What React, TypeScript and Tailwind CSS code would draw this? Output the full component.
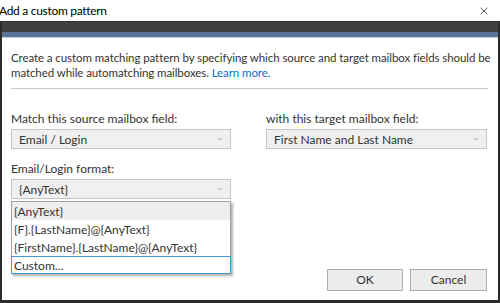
import { ChevronDown, X } from 'lucide-react';

const font = { fontFamily: 'Lato, "Noto Sans", sans-serif' };

function Select({ value, className = '' }: { value: string; className?: string }) {
  return (
    <div
      className={`flex items-center justify-between h-[20px] border border-[#c6c6c6] bg-[#f0f0f0] pl-[7px] pr-[6px] text-[12px] text-[#333] ${className}`}
    >
      <span>{value}</span>
      <ChevronDown size={8} strokeWidth={2} className="text-[#888]" />
    </div>
  );
}

const options = ['{AnyText}', '{F}.{LastName}@{AnyText}', '{FirstName}.{LastName}@{AnyText}'];

export default function App() {
  return (
    <div className="w-[500px] h-[303px] bg-white overflow-hidden flex flex-col" style={font}>
      <div className="h-[21px] flex items-center justify-between pr-[10px] text-[12px] tracking-[-0.3px] text-black shrink-0">
        <span className="-ml-[1px]">Add a custom pattern</span>
        <X size={12} strokeWidth={1.5} className="text-[#222]" />
      </div>
      <div className="flex-1 flex flex-col border-l-2 border-r-2 border-b-[3px] border-[#2b2b2b] relative">
        <div className="h-[11px] bg-[#3f3f3f] border-t border-[#333] shrink-0" />
        <div className="h-[5px] bg-[#5a7396] shrink-0" />
        <div className="h-[1px] bg-[#c9d3e2] shrink-0" />
        <div className="px-[9px] pt-[12px] text-[12px] text-[#333] leading-[15px]">
          <p className="text-[11.5px] tracking-[-0.08px] whitespace-nowrap">
            Create a custom matching pattern by specifying which source and target mailbox fields should be
            <br />
            matched while automatching mailboxes. <span className="text-[#0072c6]">Learn more.</span>
          </p>
          <div className="h-[1px] bg-[#c8c8c8] mt-[8px] mr-[1px]" />
          <div className="flex gap-[35px] mt-[22px]">
            <div className="w-[220px]">
              <div className="mb-[3px]">Match this source mailbox field:</div>
              <Select value="Email / Login" />
            </div>
            <div className="w-[221px]">
              <div className="mb-[3px]">with this target mailbox field:</div>
              <Select value="First Name and Last Name" />
            </div>
          </div>
          <div className="w-[220px] mt-[12px] relative">
            <div className="mb-[3px]">Email/Login format:</div>
            <Select value="{AnyText}" />
            <div className="absolute left-0 top-[40px] w-[220px] bg-white border border-[#a0a0a0] shadow-[2px_2px_2px_rgba(0,0,0,0.3)]">
              {options.map((o, i) => (
                <div key={o} className={`h-[18px] flex items-center pl-[2px] ${i === 0 ? 'bg-[#eeeeee]' : ''}`}>
                  {o}
                </div>
              ))}
              <div className="h-[18px] flex items-center pl-[2px] border border-[#3c9ad6] -mx-[1px] -mb-[1px]">Custom...</div>
            </div>
          </div>
        </div>
        <div className="absolute right-[11px] bottom-[9px] flex gap-[7px]">
          <button className="w-[76px] h-[22px] border border-[#adadad] bg-[#ececec] text-[12px] text-[#333]">OK</button>
          <button className="w-[77px] h-[22px] border border-[#adadad] bg-[#ececec] text-[12px] text-[#333]">Cancel</button>
        </div>
      </div>
    </div>
  );
}
